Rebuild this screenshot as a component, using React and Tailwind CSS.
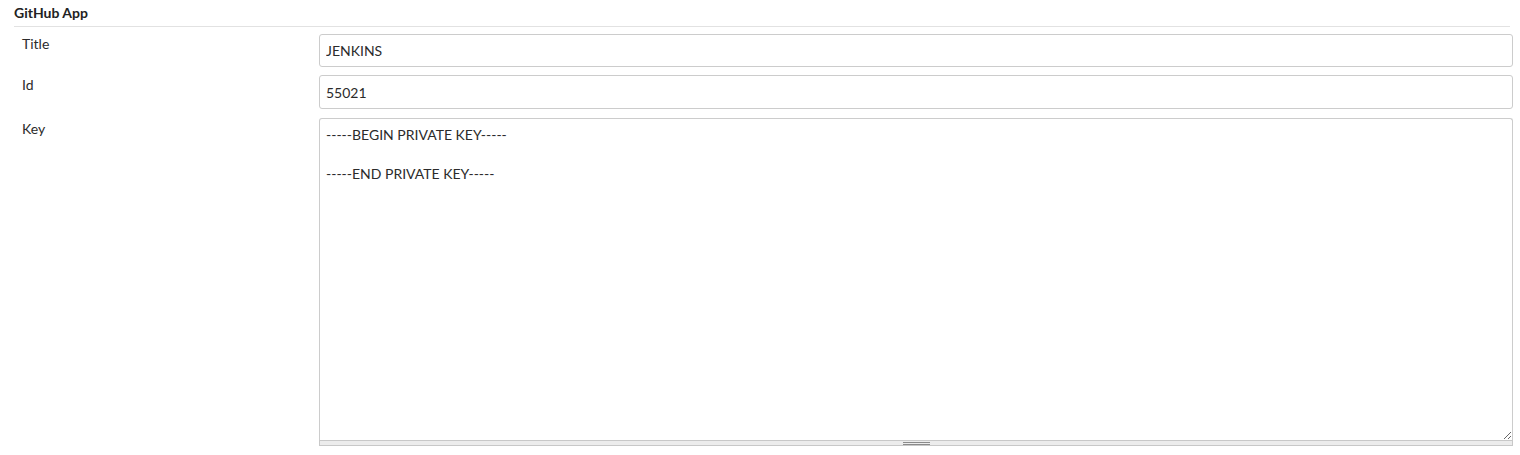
import React from "react";

const fields = [
    { label: "Title", value: "JENKINS", h: "h-[33px]" },
    { label: "Id", value: "55021", h: "h-[34px]" },
];

const keyText = "-----BEGIN PRIVATE KEY-----\n\n-----END PRIVATE KEY-----";

const App = () => {
    return (
        <div className="min-h-[455px] bg-white pl-[14px] pr-[7px] font-['Lato','Liberation_Sans',sans-serif] text-[14px] text-[#2b2b2b]">
            <div className="mr-[3px] h-[27px] border-b border-[#e2e2e2] pt-[3px] text-[14px] leading-[20px] font-bold text-[#222]">
                GitHub App
            </div>

            <div className="pt-[7px]">
                {fields.map((f, i) => (
                    <div key={f.label} className={`grid grid-cols-[305px_1fr] ${i === 0 ? "mb-[8px]" : "mb-[9px]"}`}>
                        <label className="pl-[8px] leading-[19px]">{f.label}</label>
                        <input
                            readOnly
                            value={f.value}
                            className={`${f.h} w-full rounded-[3px] border border-[#ccc] bg-white px-[6px] text-[14px] text-[#2b2b2b] outline-none`}
                        />
                    </div>
                ))}

                <div className="grid grid-cols-[305px_1fr]">
                    <label className="pl-[8px] pt-[1px] leading-[19px]">Key</label>
                    <div className="flex flex-col">
                        <textarea
                            readOnly
                            value={keyText}
                            className="h-[322px] w-full rounded-t-[3px] border border-b-0 border-[#ccc] bg-white px-[6px] pt-[6px] text-[14px] leading-[19.5px] text-[#2b2b2b] outline-none"
                        />
                        <div className="flex h-[6px] items-center justify-center border border-[#c8c8c8] bg-[#ececec]">
                            <div className="flex w-[27px] flex-col gap-[1px]">
                                <div className="h-[1px] bg-[#8a8a8a]" />
                                <div className="h-[1px] bg-[#8a8a8a]" />
                            </div>
                        </div>
                    </div>
                </div>
            </div>
        </div>
    );
};

export default App;
